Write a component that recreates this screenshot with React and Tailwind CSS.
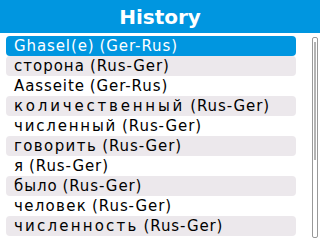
const items = [
  { word: 'Ghasel(e)', lang: '(Ger-Rus)', track: 'tracking-[0.9px]' },
  { word: 'сторона', lang: '(Rus-Ger)', track: 'tracking-[1px]' },
  { word: 'Aasseite', lang: '(Ger-Rus)', track: 'tracking-[0.9px]' },
  { word: 'количественный', lang: '(Rus-Ger)', track: 'tracking-[2.8px]' },
  { word: 'численный', lang: '(Rus-Ger)', track: 'tracking-[1.8px]' },
  { word: 'говорить', lang: '(Rus-Ger)', track: 'tracking-[1.4px]' },
  { word: 'я', lang: '(Rus-Ger)', track: 'tracking-[1px]' },
  { word: 'было', lang: '(Rus-Ger)', track: 'tracking-[0.9px]' },
  { word: 'человек', lang: '(Rus-Ger)', track: 'tracking-[1.3px]' },
  { word: 'численность', lang: '(Rus-Ger)', track: 'tracking-[2.2px]' },
];

export default function App() {
  return (
    <div className="w-[320px] h-[240px] bg-white overflow-hidden font-['DejaVu_Sans',sans-serif]">
      <div className="h-[33px] bg-[#0096e0] flex items-center justify-center">
        <h1 className="text-white font-bold text-[20px] leading-none">History</h1>
      </div>
      <div className="flex mt-[3px]">
        <ul className="flex-1 pl-[6px] pr-[16px]">
          {items.map((item, i) => (
            <li
              key={i}
              className={
                'h-[20px] flex items-center pl-[8px] rounded-[4px] text-[15px] leading-none whitespace-nowrap ' +
                (i === 0
                  ? 'bg-[#0096e0] text-white'
                  : i % 2 === 1
                  ? 'bg-[#ece8ec] text-black'
                  : 'text-black')
              }
            >
              <span className={item.track}>{item.word}</span>
              <span className="tracking-[0.9px] ml-[5px]">{item.lang}</span>
            </li>
          ))}
        </ul>
        <div className="w-[6px] h-[201px] mr-[2px] mt-[1px] border border-[#999] rounded-[2px] p-[1px] pt-[4px]">
          <div className="w-full h-[118px] bg-[#b4b4b4]" />
        </div>
      </div>
    </div>
  );
}
